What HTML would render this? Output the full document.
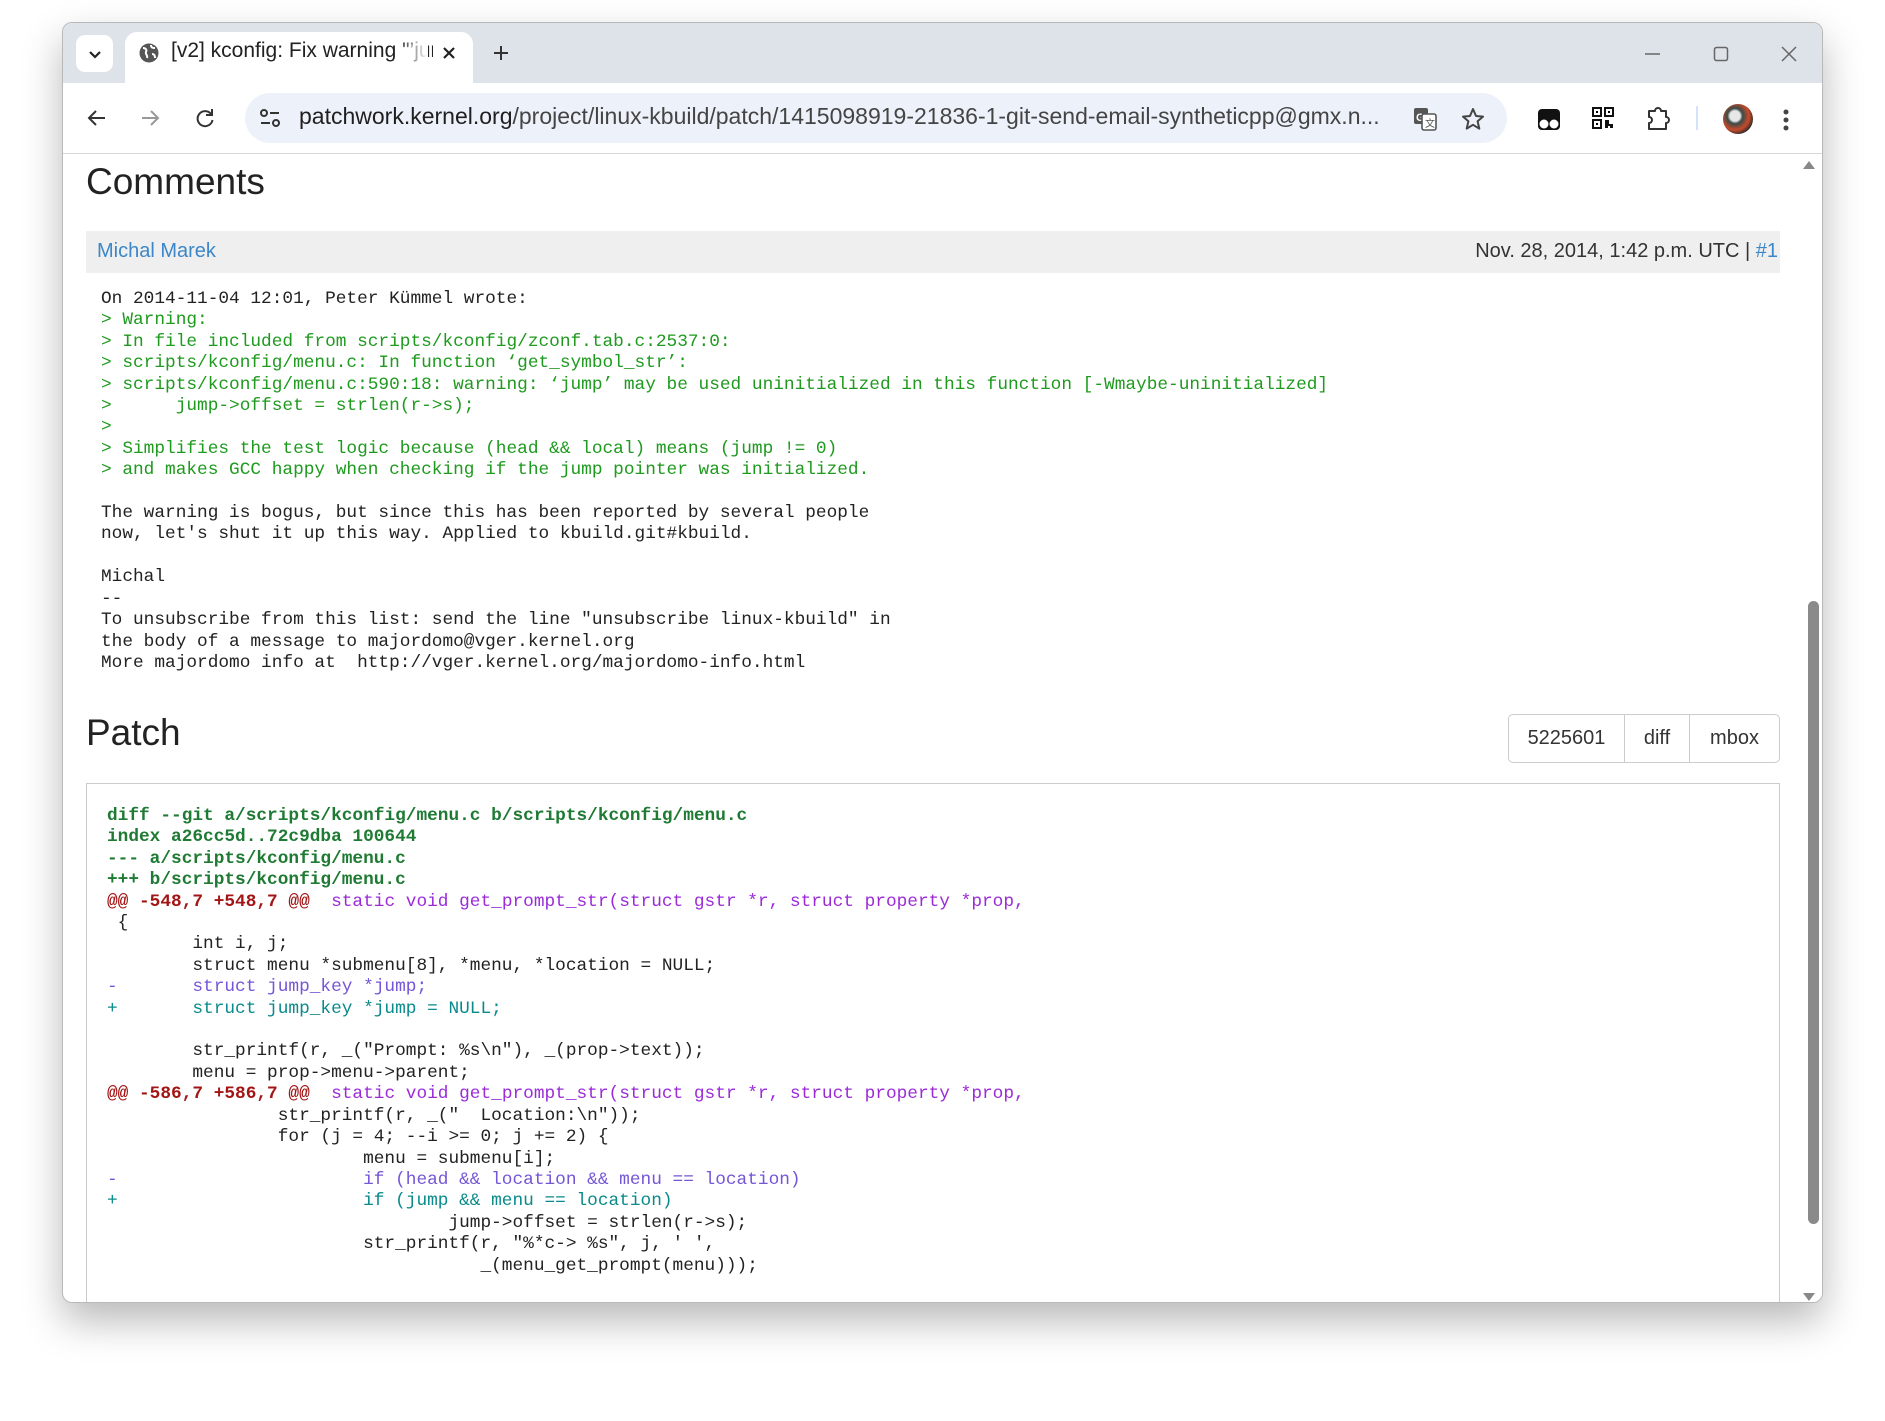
<!DOCTYPE html>
<html><head><meta charset="utf-8"><style>
*{margin:0;padding:0;box-sizing:border-box}
body{width:1885px;height:1421px;background:#fff;position:relative;overflow:hidden;font-family:"Liberation Sans",Arial,sans-serif}
.win{position:absolute;left:62px;top:22px;width:1761px;height:1281px;border:1px solid #b9b9b9;border-radius:10px;overflow:hidden;background:#fff;box-shadow:0 18px 40px rgba(0,0,0,.28)}
.tabbar{position:absolute;left:0;top:0;right:0;height:60px;background:#dee3ea}
.toolbar{position:absolute;left:0;top:60px;right:0;height:71px;background:#fff;border-bottom:1px solid #d6d6d6}
.tab{position:absolute;left:62px;top:9px;width:348px;height:52px;background:#fff;border-radius:12px 12px 0 0}
.abs{position:absolute}
.content{position:absolute;left:0;top:132px;right:0;bottom:0}
.mono{font-family:"Liberation Mono","DejaVu Sans Mono",monospace;font-size:17.8px;line-height:21.4px;white-space:pre}
.g{color:#1e9a1e}
.h{color:#1f7a34;font-weight:bold}
.r{color:#a31515;font-weight:bold}
.p{color:#9b2bd8}
.m{color:#7456d6}
.t{color:#0a8a8a}
</style></head><body>
<div class="win">
 <div class="tabbar"></div>
 <div class="abs" style="left:13px;top:12px;width:37px;height:37px;background:#fff;border-radius:9px"></div>
 <svg class="abs" style="left:23px;top:22px" width="18" height="18"><path d="M4 7l5 5 5-5" stroke="#222" stroke-width="2.2" fill="none"/></svg>
 <div class="tab"></div>
 <svg class="abs" style="left:75px;top:19px" width="22" height="22" viewBox="0 0 22 22"><circle cx="11" cy="11" r="9.5" fill="#555"/><path d="M5 6c3 0 4 2 3 4s2 3 1 6M13 3c0 3 2 3 4 3M14 12c2 0 3 1 3 4" stroke="#fff" stroke-width="2" fill="none"/></svg>
 <div class="abs" style="left:108px;top:16px;font-size:21px;color:#222;white-space:nowrap;width:262px;overflow:hidden">[v2] kconfig: Fix warning "’jump’ may</div>
 <div class="abs" style="left:335px;top:12px;width:30px;height:30px;background:linear-gradient(90deg,rgba(255,255,255,0),#fff)"></div>
 <svg class="abs" style="left:379px;top:23px" width="14" height="14"><path d="M2 2l10 10M12 2L2 12" stroke="#222" stroke-width="2.2"/></svg>
 <svg class="abs" style="left:429px;top:21px" width="18" height="18"><path d="M9 2v14M2 9h14" stroke="#333" stroke-width="2"/></svg>
 <svg class="abs" style="left:1581px;top:24px" width="18" height="10"><path d="M1 7h15" stroke="#666" stroke-width="1.5"/></svg>
 <svg class="abs" style="left:1650px;top:23px" width="16" height="16"><rect x="1.5" y="1.5" width="13" height="13" rx="2" stroke="#666" stroke-width="1.5" fill="none"/></svg>
 <svg class="abs" style="left:1718px;top:23px" width="16" height="16"><path d="M1 1l14 14M15 1L1 15" stroke="#666" stroke-width="1.5"/></svg>
 <div class="toolbar"></div>
 <svg class="abs" style="left:23px;top:84px" width="22" height="22"><path d="M19 11H4M10 4l-7 7 7 7" stroke="#333" stroke-width="2" fill="none"/></svg>
 <svg class="abs" style="left:76px;top:84px" width="22" height="22"><path d="M3 11h15M12 4l7 7-7 7" stroke="#999" stroke-width="2" fill="none"/></svg>
 <svg class="abs" style="left:131px;top:84px" width="22" height="22"><path d="M17 7A7.5 7.5 0 1 0 18.5 13" stroke="#333" stroke-width="2" fill="none"/><path d="M18 2v6h-6" fill="none" stroke="#333" stroke-width="2"/></svg>
 <div class="abs" style="left:182px;top:70px;width:1262px;height:50px;background:#edf2fa;border-radius:25px"></div>
 <svg class="abs" style="left:195px;top:84px" width="24" height="22"><circle cx="6" cy="6" r="3" stroke="#333" stroke-width="2" fill="none"/><path d="M12 6h9M3 16h9" stroke="#333" stroke-width="2"/><circle cx="18" cy="16" r="3" stroke="#333" stroke-width="2" fill="none"/></svg>
 <div class="abs" style="left:236px;top:80px;font-size:23px;color:#1f1f1f;white-space:nowrap">patchwork.kernel.org<span style="color:#444">/project/linux-kbuild/patch/1415098919-21836-1-git-send-email-syntheticpp@gmx.n...</span></div>
 <svg class="abs" style="left:1349px;top:83px" width="26" height="26"><rect x="2" y="2" width="14" height="16" rx="2" fill="#555"/><text x="4" y="15" font-size="11" fill="#fff" font-family="Liberation Sans" font-weight="bold">G</text><rect x="10" y="8" width="14" height="16" rx="2" fill="#fff" stroke="#555" stroke-width="1.6"/><text x="13" y="21" font-size="10" fill="#555" font-family="Liberation Sans">文</text></svg>
 <svg class="abs" style="left:1398px;top:84px" width="24" height="24"><path d="M12 2l3 7 7 .6-5.4 4.7 1.7 7.3L12 17.8 5.7 21.6l1.7-7.3L2 9.6 9 9z" stroke="#444" stroke-width="2" fill="none" stroke-linejoin="round"/></svg>
 <svg class="abs" style="left:1474px;top:84px" width="24" height="24"><rect x="1" y="2" width="22" height="21" rx="4" fill="#111"/><circle cx="7" cy="17" r="4.5" fill="#fff"/><circle cx="17" cy="17" r="4.5" fill="#fff"/></svg>
 <svg class="abs" style="left:1528px;top:83px" width="24" height="24"><g fill="none" stroke="#111" stroke-width="2"><rect x="2" y="2" width="8" height="8"/><rect x="14" y="2" width="8" height="8"/><rect x="2" y="14" width="8" height="8"/></g><rect x="5" y="5" width="2" height="2"/><rect x="17" y="5" width="2" height="2"/><rect x="5" y="17" width="2" height="2"/><path d="M14 14h4v4h4v4h-3v-2h-2v2h-3z" fill="#111"/></svg>
 <svg class="abs" style="left:1582px;top:83px" width="26" height="26"><path d="M4 5h6a3 3 0 0 1 6 0h5v6a3 3 0 0 1 0 6v6H4v-6a3 3 0 0 0 0-6z" stroke="#333" stroke-width="2" fill="none" stroke-linejoin="round"/></svg>
 <div class="abs" style="left:1633px;top:83px;width:2px;height:24px;background:#d3e3fd"></div>
 <div class="abs" style="left:1660px;top:81px;width:30px;height:30px;border-radius:50%;background:radial-gradient(circle at 40% 40%,#e8e8e8 0 20%,#3a4a48 30%,#c84a2a 55%,#2b2b2b 75%)"></div>
 <svg class="abs" style="left:1719px;top:85px" width="8" height="24"><circle cx="4" cy="4" r="2.5" fill="#444"/><circle cx="4" cy="12" r="2.5" fill="#444"/><circle cx="4" cy="20" r="2.5" fill="#444"/></svg>

 <div class="content">
  <div class="abs" style="left:23px;top:6px;font-size:37px;color:#222">Comments</div>
  <div class="abs" style="left:23px;top:76px;width:1694px;height:42px;background:#efefef"></div>
  <div class="abs" style="left:34px;top:85px;font-size:20px;color:#3b87c9">Michal Marek</div>
  <div class="abs" style="right:44px;top:85px;font-size:20px;color:#333;white-space:nowrap">Nov. 28, 2014, 1:42 p.m. UTC | <span style="color:#3b87c9">#1</span></div>
  <div class="abs mono" style="left:38px;top:134px;color:#222">On 2014-11-04 12:01, Peter Kümmel wrote:
<span class="g">&gt; Warning:
&gt; In file included from scripts/kconfig/zconf.tab.c:2537:0:
&gt; scripts/kconfig/menu.c: In function ‘get_symbol_str’:
&gt; scripts/kconfig/menu.c:590:18: warning: ‘jump’ may be used uninitialized in this function [-Wmaybe-uninitialized]
&gt;      jump-&gt;offset = strlen(r-&gt;s);
&gt;
&gt; Simplifies the test logic because (head &amp;&amp; local) means (jump != 0)
&gt; and makes GCC happy when checking if the jump pointer was initialized.</span>

The warning is bogus, but since this has been reported by several people
now, let's shut it up this way. Applied to kbuild.git#kbuild.

Michal
--
To unsubscribe from this list: send the line "unsubscribe linux-kbuild" in
the body of a message to majordomo@vger.kernel.org
More majordomo info at  http://vger.kernel.org/majordomo-info.html</div>

  <div class="abs" style="left:23px;top:557px;font-size:37px;color:#222">Patch</div>
  <div class="abs" style="left:1445px;top:559px;width:272px;height:49px;border:1px solid #ccc;border-radius:5px;font-size:20px;color:#333">
   <div class="abs" style="left:0;top:0;width:116px;height:47px;border-right:1px solid #ccc;text-align:center;line-height:47px">5225601</div>
   <div class="abs" style="left:116px;top:0;width:65px;height:47px;border-right:1px solid #ccc;text-align:center;line-height:47px">diff</div>
   <div class="abs" style="left:181px;top:0;width:89px;height:47px;text-align:center;line-height:47px">mbox</div>
  </div>
  <div class="abs" style="left:23px;top:628px;width:1694px;height:600px;border:1px solid #ccc;background:#fff"></div>
  <div class="abs mono" style="left:44px;top:651px;color:#222"><span class="h">diff --git a/scripts/kconfig/menu.c b/scripts/kconfig/menu.c
index a26cc5d..72c9dba 100644
--- a/scripts/kconfig/menu.c
+++ b/scripts/kconfig/menu.c</span>
<span class="r">@@ -548,7 +548,7 @@</span> <span class="p"> static void get_prompt_str(struct gstr *r, struct property *prop,</span>
 {
        int i, j;
        struct menu *submenu[8], *menu, *location = NULL;
<span class="m">-       struct jump_key *jump;</span>
<span class="t">+       struct jump_key *jump = NULL;</span>

        str_printf(r, _("Prompt: %s\n"), _(prop-&gt;text));
        menu = prop-&gt;menu-&gt;parent;
<span class="r">@@ -586,7 +586,7 @@</span> <span class="p"> static void get_prompt_str(struct gstr *r, struct property *prop,</span>
                str_printf(r, _("  Location:\n"));
                for (j = 4; --i &gt;= 0; j += 2) {
                        menu = submenu[i];
<span class="m">-                       if (head &amp;&amp; location &amp;&amp; menu == location)</span>
<span class="t">+                       if (jump &amp;&amp; menu == location)</span>
                                jump-&gt;offset = strlen(r-&gt;s);
                        str_printf(r, "%*c-&gt; %s", j, ' ',
                                   _(menu_get_prompt(menu)));</div>
  <div class="abs" style="right:0;top:0;width:22px;bottom:0;background:#fff"></div>
  <svg class="abs" style="left:1738px;top:4px" width="16" height="12"><path d="M8 2l6 8H2z" fill="#888"/></svg>
  <div class="abs" style="left:1745px;top:446px;width:11px;height:623px;background:#8a8a8a;border-radius:6px"></div>
  <svg class="abs" style="left:1738px;top:1136px" width="16" height="12"><path d="M8 10l6-8H2z" fill="#888"/></svg>
 </div>
</div>
</body></html>
